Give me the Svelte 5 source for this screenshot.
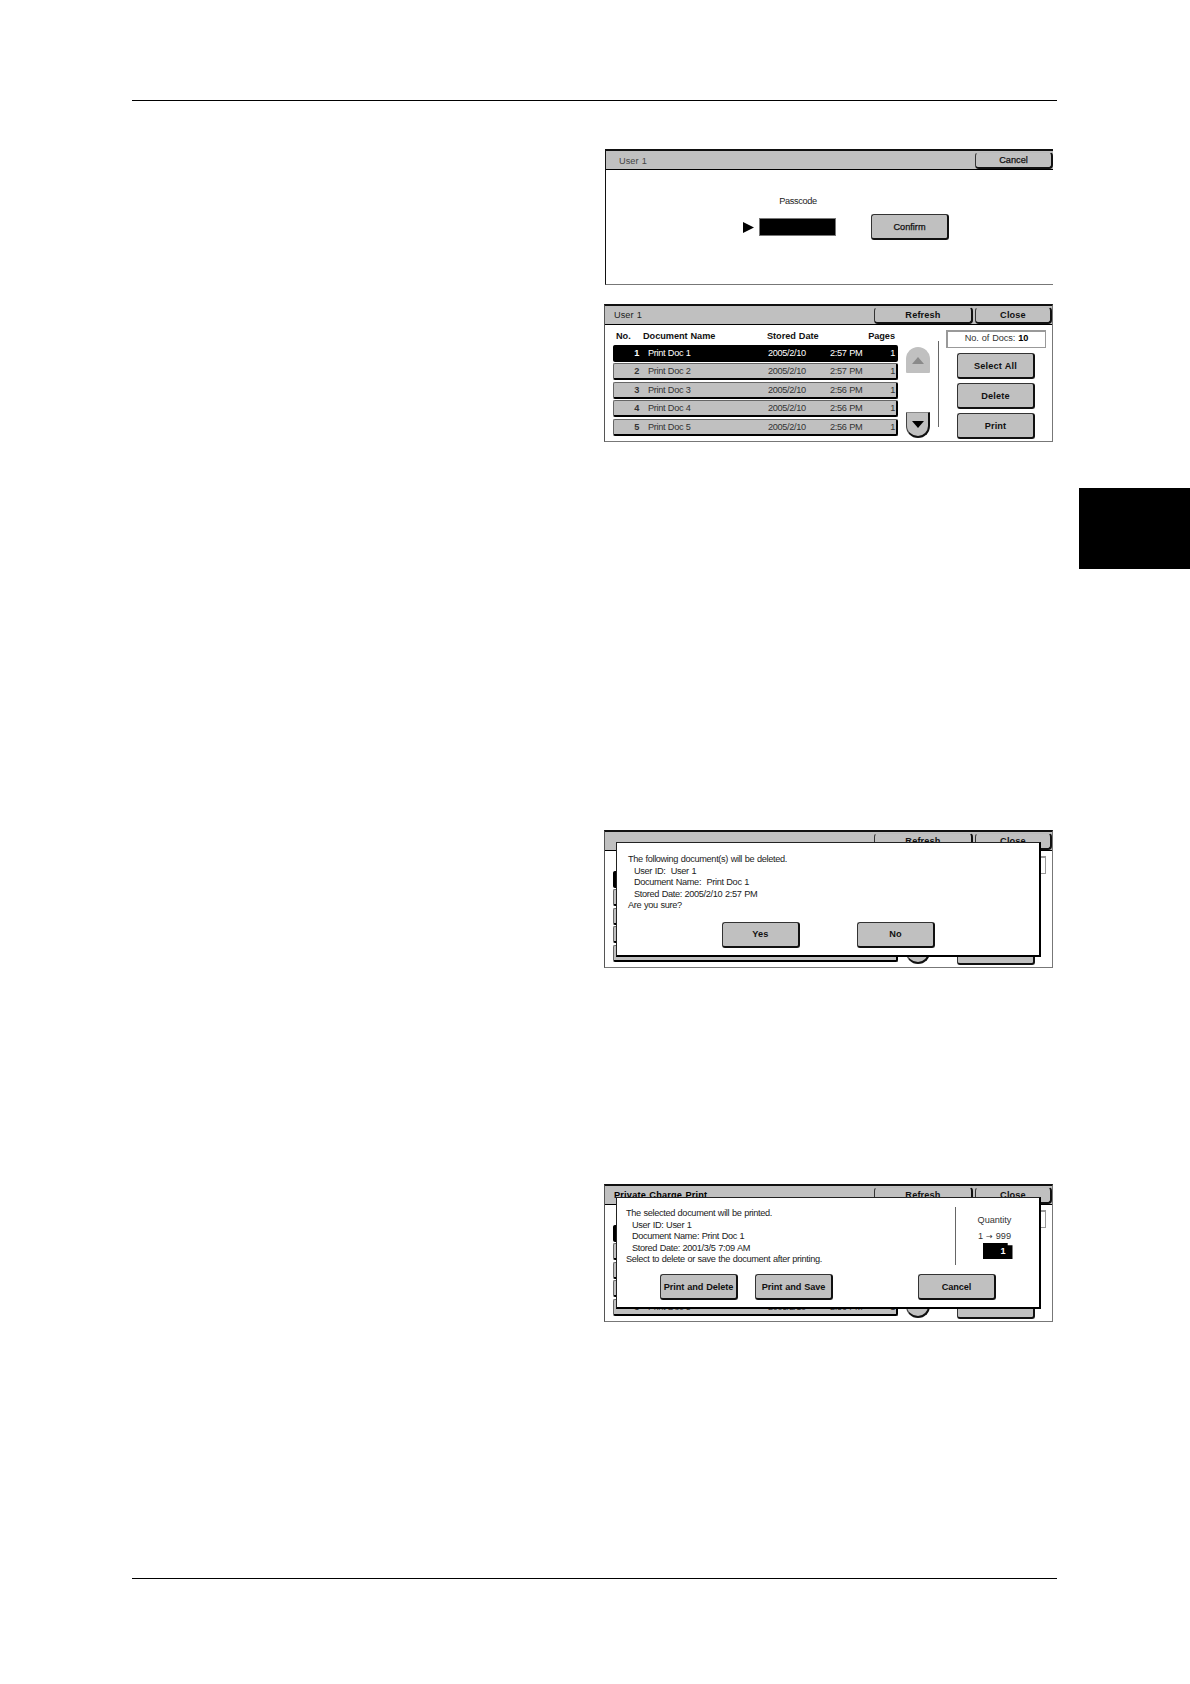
<script>
  const docs = [
    { no: 1, name: 'Print Doc 1', date: '2005/2/10', time: '2:57 PM', pages: 1, active: true },
    { no: 2, name: 'Print Doc 2', date: '2005/2/10', time: '2:57 PM', pages: 1 },
    { no: 3, name: 'Print Doc 3', date: '2005/2/10', time: '2:56 PM', pages: 1 },
    { no: 4, name: 'Print Doc 4', date: '2005/2/10', time: '2:56 PM', pages: 1 },
    { no: 5, name: 'Print Doc 5', date: '2005/2/10', time: '2:56 PM', pages: 1 }
  ];
</script>

{#snippet listPanel(title, boldTitle)}
  <header class="titlebar">
    <span class="title" class:strong={boldTitle}>{title}</span>
    <button class="btn tbtn refresh">Refresh</button>
    <button class="btn tbtn close">Close</button>
  </header>
  <div class="listbody">
    <div class="listcol">
      <div class="row head">
        <span class="hno">No.</span>
        <span>Document Name</span>
        <span>Stored Date</span>
        <span></span>
        <span class="pg">Pages</span>
      </div>
      {#each docs as d}
        <div class="row item" class:active={d.active}>
          <span class="no">{d.no}</span>
          <span>{d.name}</span>
          <span>{d.date}</span>
          <span>{d.time}</span>
          <span class="pg">{d.pages}</span>
        </div>
      {/each}
    </div>
    <div class="scroller">
      <div class="arrow up"><svg width="12" height="7" viewBox="0 0 12 7"><path d="M6 0 12 7H0Z" fill="#8a8a8a" /></svg></div>
      <div class="arrow down"><svg width="12" height="7" viewBox="0 0 12 7"><path d="M0 0H12L6 7Z" fill="#000" /></svg></div>
    </div>
    <div class="vline"></div>
    <div class="side">
      <div class="count">No. of Docs: <b>10</b></div>
      <button class="btn big">Select All</button>
      <button class="btn big">Delete</button>
      <button class="btn big">Print</button>
    </div>
  </div>
{/snippet}

<div class="page">
  <div class="rule"></div>
  <div class="main">
    <div class="figures">
      <section class="panel p1">
        <header class="titlebar t1">
          <span class="title">User 1</span>
          <button class="btn tbtn cancel">Cancel</button>
        </header>
        <div class="passbody">
          <div class="passlabel">Passcode</div>
          <div class="passrow">
            <svg class="pointer" width="11" height="11" viewBox="0 0 11 11"><path d="M0 0 11 5.5 0 11Z" fill="#000" /></svg>
            <div class="passfield"></div>
            <button class="btn big confirm">Confirm</button>
          </div>
        </div>
      </section>

      <section class="panel p2">
        {@render listPanel('User 1', false)}
      </section>

      <section class="panel p3">
        {@render listPanel('', false)}
        <div class="dialog d3">
          <div class="msg">
            <p>The following document(s) will be deleted.</p>
            <p class="in">User ID: &nbsp;User 1</p>
            <p class="in">Document Name: &nbsp;Print Doc 1</p>
            <p class="in">Stored Date: 2005/2/10 2:57 PM</p>
            <p>Are you sure?</p>
          </div>
          <div class="actions yn">
            <button class="btn big">Yes</button>
            <button class="btn big">No</button>
          </div>
        </div>
      </section>

      <section class="panel p4">
        {@render listPanel('Private Charge Print', true)}
        <div class="dialog d4">
          <div class="top4">
            <div class="msg">
              <p>The selected document will be printed.</p>
              <p class="in">User ID: User 1</p>
              <p class="in">Document Name: Print Doc 1</p>
              <p class="in">Stored Date: 2001/3/5 7:09 AM</p>
              <p>Select to delete or save the document after printing.</p>
            </div>
            <div class="qty">
              <div>Quantity</div>
              <div class="range">1 <span class="to">→</span> 999</div>
              <div class="qfield">1</div>
            </div>
          </div>
          <div class="actions pr">
            <button class="btn big">Print and Delete</button>
            <button class="btn big">Print and Save</button>
            <button class="btn big last">Cancel</button>
          </div>
        </div>
      </section>
    </div>
    <div class="tab"></div>
  </div>
  <div class="rule bottom"></div>
</div>

<style>
  :global(body) {
    margin: 0;
    background: #fff;
  }
  .page {
    width: 1190px;
    height: 1684px;
    padding-top: 100px;
    box-sizing: border-box;
    font-family: "Liberation Sans", Arial, sans-serif;
    font-size: 9.2px;
    letter-spacing: -0.35px;
    word-spacing: 0.5px;
    color: #111;
    overflow: hidden;
  }
  .rule {
    width: 925px;
    height: 1px;
    margin-left: 132px;
    background: #000;
  }
  .rule.bottom {
    margin-top: 256px;
  }
  .main {
    display: flex;
    align-items: flex-start;
  }
  .figures {
    width: 449px;
    margin-left: 604px;
    filter: blur(0.4px);
  }
  .tab {
    width: 111px;
    height: 81px;
    margin: 387px 0 0 26px;
    background: #000;
  }
  .panel {
    position: relative;
    box-sizing: border-box;
    width: 449px;
    height: 138px;
    border: 1px solid #777;
    border-top: 2px solid #111;
    border-left-color: #555;
    background: #fff;
  }
  .p1 {
    margin: 48px 0 0 1px;
    width: 448px;
    height: 136px;
    border-left-color: #111;
    border-right: none;
  }
  .p2 {
    margin-top: 19px;
  }
  .p3 {
    margin-top: 388px;
  }
  .p4 {
    margin-top: 216px;
  }
  .titlebar {
    display: flex;
    align-items: center;
    height: 18px;
    background: #c0c0c0;
    border-bottom: 1px solid #000;
  }
  .t1 {
    height: 18px;
  }
  .title {
    flex: 1;
    padding-left: 9px;
    letter-spacing: 0.05px;
    color: #222;
  }
  .t1 .title {
    padding-left: 13px;
    padding-top: 2px;
    color: #444;
  }
  .title.strong {
    font-weight: bold;
    color: #000;
    letter-spacing: 0.2px;
  }
  .btn {
    box-sizing: border-box;
    padding: 0;
    font: inherit;
    font-weight: bold;
    letter-spacing: 0.15px;
    word-spacing: 0.5px;
    color: #111;
    background: #c0c0c0;
    border: 1px solid #333;
    border-right: 2px solid #111;
    border-bottom: 2px solid #111;
    border-radius: 3px;
    text-align: center;
  }
  .tbtn {
    height: 17px;
    border-top-color: #bbb;
    border-radius: 4px;
  }
  .refresh {
    width: 99px;
    margin-right: 2px;
  }
  .close {
    width: 77px;
  }
  .cancel {
    width: 78px;
    font-weight: normal;
    letter-spacing: 0;
    -webkit-text-stroke: 0.25px #111;
  }
  .passbody {
    display: flex;
    flex-direction: column;
  }
  .passlabel {
    margin: 26px 0 0 173px;
    width: 38px;
    text-align: center;
    white-space: nowrap;
    color: #222;
  }
  .passrow {
    display: flex;
    align-items: center;
    margin-top: 8px;
    padding-left: 137px;
  }
  .passfield {
    box-sizing: border-box;
    width: 77px;
    height: 18px;
    margin-left: 5px;
    background: #000;
    border: 1px solid #777;
  }
  .big {
    width: 78px;
    height: 26px;
  }
  .confirm {
    margin-left: 35px;
    font-weight: normal;
    letter-spacing: 0;
    -webkit-text-stroke: 0.25px #111;
  }
  .listbody {
    display: flex;
    align-items: flex-start;
    height: 115px;
  }
  .listcol {
    width: 285px;
    margin-left: 8px;
    padding-top: 5px;
    display: flex;
    flex-direction: column;
  }
  .row {
    display: grid;
    grid-template-columns: 26px 128px 62px 42px 1fr;
    align-items: center;
    box-sizing: border-box;
    white-space: nowrap;
  }
  .head {
    height: 15px;
    padding-bottom: 3px;
    font-weight: bold;
    letter-spacing: -0.05px;
    color: #111;
    grid-template-columns: 30px 124px 62px 37px 1fr;
  }
  .hno {
    padding-left: 3px;
  }
  .head .pg {
    padding-right: 3px;
  }
  .item {
    height: 17px;
    margin-bottom: 1.4px;
    background: #c0c0c0;
    border: 1px solid #666;
    border-bottom: 2px solid #000;
    border-right: 2px solid #000;
    border-radius: 2px;
    color: #333;
  }
  .item.active {
    background: #000;
    color: #fff;
    border-color: #000;
  }
  .no {
    text-align: right;
    margin-right: 1px;
    font-weight: bold;
    grid-column: 1;
  }
  .item span:nth-child(2) {
    padding-left: 8px;
  }
  .pg {
    text-align: right;
    padding-right: 1px;
  }
  .scroller {
    display: flex;
    flex-direction: column;
    justify-content: space-between;
    align-items: center;
    box-sizing: border-box;
    width: 24px;
    height: 91px;
    margin: 22px 0 0 8px;
  }
  .arrow {
    box-sizing: border-box;
    display: flex;
    align-items: center;
    justify-content: center;
    width: 24px;
    height: 26px;
    background: #c0c0c0;
  }
  .up {
    border-radius: 12px 12px 1px 1px;
  }
  .down {
    border: 1px solid #444;
    border-bottom: 2px solid #111;
    border-right: 2px solid #111;
    border-top: 1px solid #888;
    border-radius: 1px 1px 12px 12px;
  }
  .vline {
    width: 1px;
    height: 86px;
    margin: 16px 0 0 8px;
    background: #666;
  }
  .side {
    display: flex;
    flex-direction: column;
    align-items: center;
    width: 100px;
    margin: 5px 0 0 7px;
    gap: 4px;
  }
  .count {
    box-sizing: border-box;
    width: 100px;
    height: 18px;
    margin-bottom: 1px;
    border: 1px solid #999;
    border-left-width: 2px;
    border-top-width: 2px;
    text-align: center;
    line-height: 13px;
    color: #333;
    letter-spacing: -0.1px;
  }
  .count b {
    color: #000;
  }
  .dialog {
    position: absolute;
    left: 11px;
    box-sizing: border-box;
    width: 425px;
    background: #fff;
    border: 1px solid #222;
    border-right: 2px solid #000;
    border-bottom: 2px solid #000;
    display: flex;
    flex-direction: column;
    color: #222;
  }
  .d3 {
    top: 10px;
    height: 115px;
    padding: 11px 0 0 11px;
  }
  .d4 {
    top: 11px;
    height: 112px;
    padding: 11px 0 0 9px;
  }
  .msg p {
    margin: 0;
    height: 11.6px;
    line-height: 11px;
    white-space: nowrap;
  }
  .msg .in {
    padding-left: 6px;
  }
  .actions {
    display: flex;
  }
  .yn {
    gap: 57px;
    margin: 10px 0 0 94px;
  }
  .pr {
    margin: 8px 0 0 34px;
    gap: 17px;
  }
  .pr .big {
    letter-spacing: -0.08px;
  }
  .pr .last {
    margin-left: 68px;
  }
  .top4 {
    display: flex;
    justify-content: space-between;
    height: 58px;
    margin-top: -1px;
  }
  .qty {
    box-sizing: border-box;
    display: flex;
    flex-direction: column;
    align-items: center;
    width: 78px;
    height: 58px;
    margin-top: -1px;
    margin-right: 6px;
    padding-top: 8px;
    border-left: 1px solid #666;
    text-align: center;
    color: #333;
    letter-spacing: -0.05px;
  }
  .range {
    margin-top: 6px;
  }
  .to {
    font-family: "DejaVu Sans", sans-serif;
    font-size: 8px;
  }
  .qfield {
    box-sizing: border-box;
    width: 30px;
    height: 16px;
    margin-top: 2px;
    margin-left: 6px;
    padding-right: 7px;
    text-align: right;
    line-height: 17px;
    font-weight: bold;
    color: #fff;
    background: #000;
    clip-path: polygon(0 0, 84% 0, 84% 14%, 100% 14%, 100% 100%, 0 100%);
  }
</style>
